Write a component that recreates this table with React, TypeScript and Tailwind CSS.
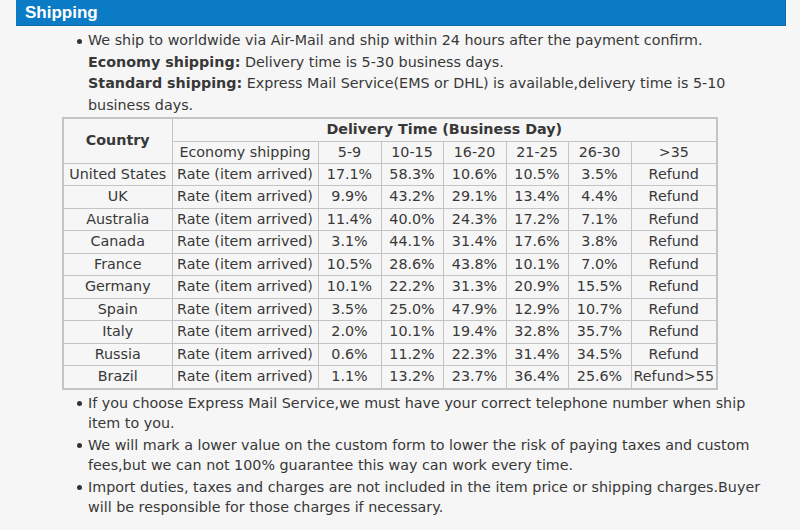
import React from "react";

const rows: [string, string, string, string, string, string, string][] = [
  ["United States", "17.1%", "58.3%", "10.6%", "10.5%", "3.5%", "Refund"],
  ["UK", "9.9%", "43.2%", "29.1%", "13.4%", "4.4%", "Refund"],
  ["Australia", "11.4%", "40.0%", "24.3%", "17.2%", "7.1%", "Refund"],
  ["Canada", "3.1%", "44.1%", "31.4%", "17.6%", "3.8%", "Refund"],
  ["France", "10.5%", "28.6%", "43.8%", "10.1%", "7.0%", "Refund"],
  ["Germany", "10.1%", "22.2%", "31.3%", "20.9%", "15.5%", "Refund"],
  ["Spain", "3.5%", "25.0%", "47.9%", "12.9%", "10.7%", "Refund"],
  ["Italy", "2.0%", "10.1%", "19.4%", "32.8%", "35.7%", "Refund"],
  ["Russia", "0.6%", "11.2%", "22.3%", "31.4%", "34.5%", "Refund"],
  ["Brazil", "1.1%", "13.2%", "23.7%", "36.4%", "25.6%", "Refund>55"],
];

const cell = "border border-[#c4c4c4] text-center p-0 whitespace-nowrap";

export default function App() {
  return (
    <div
      className="w-[800px] h-[530px] bg-[#f6f6f6] text-[#383838] overflow-hidden"
      style={{ fontFamily: '"DejaVu Sans", Verdana, sans-serif' }}
    >
      <div className="ml-[16px] w-[770px] h-[26px] bg-[#0a7bc4] border-r border-b border-[#0a6aab] flex items-center pl-[9px]">
        <span
          className="text-white font-bold text-[17px] leading-none"
          style={{ fontFamily: '"Liberation Sans", Arial, sans-serif' }}
        >
          Shipping
        </span>
      </div>

      <ul className="pl-[88px] pr-[30px] pt-[4px] text-[14.3px] leading-[21.5px]">
        <li className="relative">
          <span className="absolute left-[-11px] top-[9px] w-[5px] h-[5px] rounded-full bg-[#333]" />
          We ship to worldwide via Air-Mail and ship within 24 hours after the payment confirm.
          <br />
          <b>Economy shipping:</b> Delivery time is 5-30 business days.
          <br />
          <b>Standard shipping:</b> Express Mail Service(EMS or DHL) is available,delivery time is 5-10 business days.
        </li>
      </ul>

      <table
        className="ml-[62px] mt-[1px] border-collapse border-2 border-[#c4c4c4] table-fixed text-[14.3px]"
        style={{ width: 654 }}
      >
        <colgroup>
          <col style={{ width: 109 }} />
          <col style={{ width: 146 }} />
          <col style={{ width: 63 }} />
          <col style={{ width: 62 }} />
          <col style={{ width: 63 }} />
          <col style={{ width: 62 }} />
          <col style={{ width: 63 }} />
          <col style={{ width: 86 }} />
        </colgroup>
        <tbody>
          <tr className="h-[23px]">
            <td rowSpan={2} className={cell + " font-bold"}>
              Country
            </td>
            <td colSpan={7} className={cell + " font-bold"}>
              Delivery Time (Business Day)
            </td>
          </tr>
          <tr className="h-[22px]">
            <td className={cell}>Economy shipping</td>
            <td className={cell}>5-9</td>
            <td className={cell}>10-15</td>
            <td className={cell}>16-20</td>
            <td className={cell}>21-25</td>
            <td className={cell}>26-30</td>
            <td className={cell}>&gt;35</td>
          </tr>
          {rows.map((r) => (
            <tr key={r[0]} className="h-[22.5px]">
              <td className={cell}>{r[0]}</td>
              <td className={cell}>Rate (item arrived)</td>
              {r.slice(1).map((v, i) => (
                <td key={i} className={cell}>
                  {v}
                </td>
              ))}
            </tr>
          ))}
        </tbody>
      </table>

      <ul className="pl-[88px] pr-[30px] pt-[3px] text-[14.3px] leading-[20.5px]">
        {[
          "If you choose Express Mail Service,we must have your correct telephone number when ship item to you.",
          "We will mark a lower value on the custom form to lower the risk of paying taxes and custom fees,but we can not 100% guarantee this way can work every time.",
          "Import duties, taxes and charges are not included in the item price or shipping charges.Buyer will be responsible for those charges if necessary.",
        ].map((t) => (
          <li key={t} className="relative mb-[1px]">
            <span className="absolute left-[-11px] top-[8px] w-[5px] h-[5px] rounded-full bg-[#333]" />
            {t}
          </li>
        ))}
      </ul>
    </div>
  );
}
